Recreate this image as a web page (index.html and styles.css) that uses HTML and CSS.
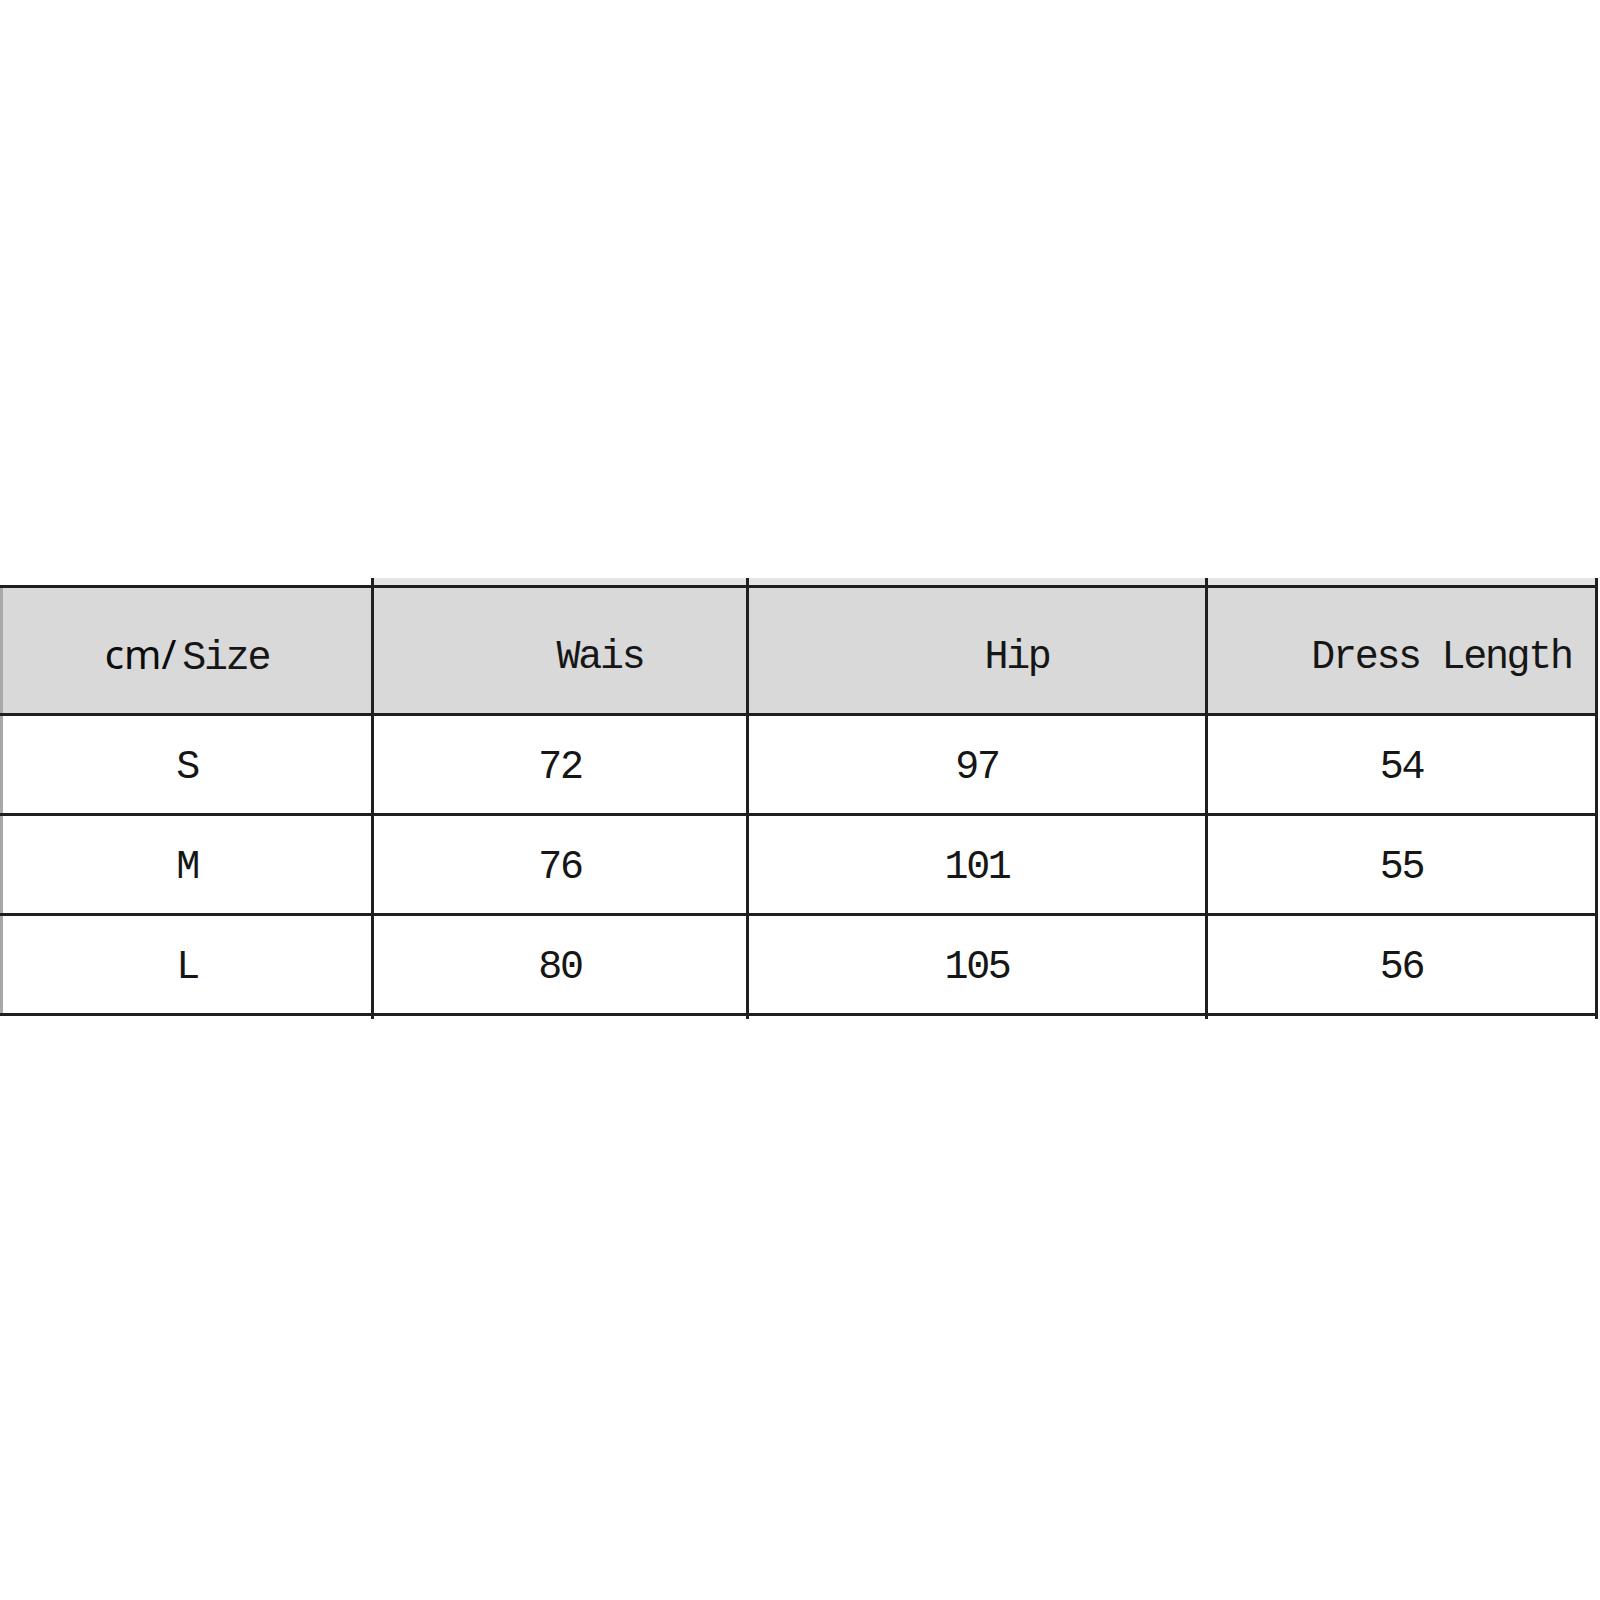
FILE: index.html
```html
<!DOCTYPE html>
<html lang="en">
<head>
<meta charset="utf-8">
<title>Size chart</title>
<link rel="stylesheet" href="styles.css">
</head>
<body>
<main class="page">
  <table class="chart">
    <colgroup>
      <col class="c1"><col class="c2"><col class="c3"><col class="c4">
    </colgroup>
    <tbody>
      <tr class="cap" aria-hidden="true"><td></td><td></td><td></td><td></td></tr>
      <tr class="head">
        <th class="first"><span class="sans">cm/</span><span class="mono">Size</span></th>
        <th><span class="mono">Wais</span></th>
        <th><span class="mono">Hip</span></th>
        <th><span class="mono">Dress Length</span></th>
      </tr>
      <tr class="row"><td>S</td><td>72</td><td>97</td><td>54</td></tr>
      <tr class="row"><td>M</td><td>76</td><td>101</td><td>55</td></tr>
      <tr class="row last"><td>L</td><td>80</td><td>105</td><td>56</td></tr>
      <tr class="tail" aria-hidden="true"><td></td><td></td><td></td><td></td></tr>
    </tbody>
  </table>
</main>
</body>
</html>
```

FILE: styles.css
```css
html, body {
  margin: 0;
  padding: 0;
  background: #ffffff;
}

.page {
  padding-top: 578px;
  padding-left: 0;
}

.chart {
  border-collapse: collapse;
  table-layout: fixed;
  width: 1598px;
}

.c1 { width: 371px; }
.c2 { width: 375px; }
.c3 { width: 459px; }
.c4 { width: 390px; }

.chart th,
.chart td {
  border: 3px solid #1f1f1f;
  padding: 0;
  text-align: center;
  vertical-align: middle;
  font-family: "Liberation Mono", "DejaVu Sans Mono", monospace;
  font-size: 40px;
  letter-spacing: -2.3px;
  font-weight: normal;
  color: #161616;
}

.chart tr > :first-child {
  border-left-color: #a8a8a8;
}

/* thin overhang above the header */
.cap td {
  height: 7px;
  border-top: none;
  border-bottom: none;
  background: #e4e4e4;
}
.cap td:first-child {
  background: #ffffff;
  border-left: none;
}

.head th {
  height: 111px;
  padding-top: 14px;
  background: #d9d9d9;
  padding-left: 80px;
  line-height: 1.1;
}
.head th.first {
  padding-left: 0;
}

.sans {
  font-family: "Noto Sans", "DejaVu Sans", sans-serif;
  font-size: 40px;
  line-height: 1;
  letter-spacing: 0;
  color: #0c0c0c;
  margin-right: 6px;
}

.mono {
  font-family: "Liberation Mono", "DejaVu Sans Mono", monospace;
}

.row td {
  height: 91px;
  padding-top: 6px;
}

.tail td {
  height: 3px;
  border-top: none;
  border-bottom: none;
}
.tail td:first-child {
  border-left: none;
}
```
